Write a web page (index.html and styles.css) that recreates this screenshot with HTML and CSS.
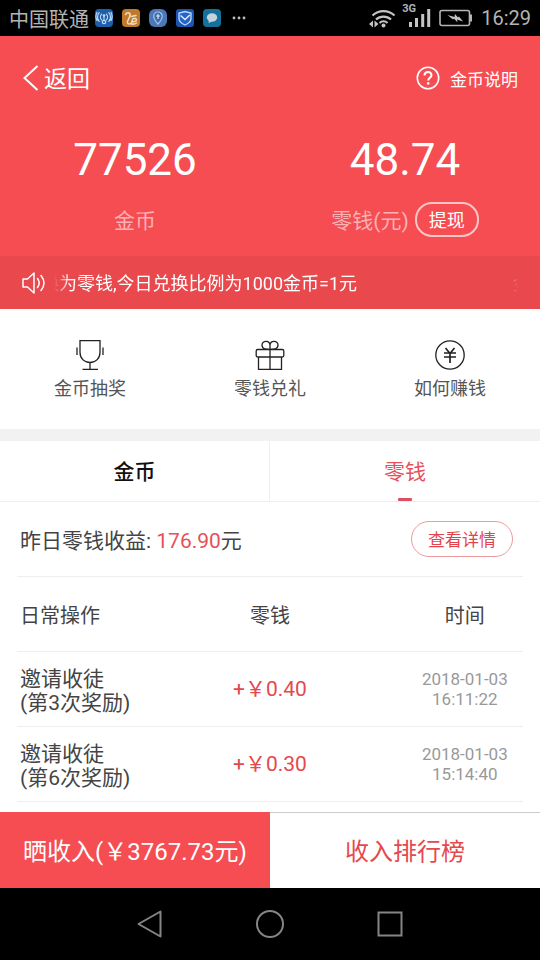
FILE: index.html
```html
<!DOCTYPE html>
<html lang="zh-CN">
<head>
<meta charset="utf-8">
<meta name="viewport" content="width=device-width, initial-scale=1">
<title>零钱</title>
<link rel="stylesheet" href="styles.css">
</head>
<body>
<div class="status">
  <span class="carrier">中国联通</span>
  <div class="apps">
    <svg width="18" height="18" viewBox="0 0 18 18"><rect width="18" height="18" rx="4" fill="#1c5fae"/><g fill="none" stroke="#c3dcf4" stroke-width="1.2" stroke-linecap="round"><path d="M6.600 5.200a4 4 0 0 0 0 5.600M11.400 5.200a4 4 0 0 1 0 5.600M4.200 3.600a6.500 6.500 0 0 0 0 8.800M13.800 3.600a6.500 6.500 0 0 1 0 8.800M2 3.500a8 8 0 0 0 0 8M16 3.500a8 8 0 0 1 0 8"/><path d="M9 7v4.500"/><circle cx="9" cy="13" r="1.700"/></g><circle cx="9" cy="6.500" r="1.300" fill="#c3dcf4"/></svg>
    <svg width="18" height="18" viewBox="0 0 18 18"><rect width="18" height="18" rx="4" fill="#c07a2c"/><g fill="none" stroke="#f2dcc0" stroke-width="1.500" stroke-linecap="round" stroke-linejoin="round"><path d="M3.500 5.500q1.500-2.500 3.500-1.500 2 1 .5 4L5.500 12.500q-.5 2.500 2 2.500 2.500-.5 2.500-3 .3-2.500 2.200-2.800 2.500 0 2.200 2-.4 1.800-4 1.600"/><path d="M9.500 15q3 .500 5-1M9 7.500l5-1"/></g></svg>
    <svg width="18" height="18" viewBox="0 0 18 18"><rect width="18" height="18" rx="6" fill="#4a78b8"/><path d="M9 15C6 11.500 4.800 9.500 4.800 7.200a4.200 4.200 0 0 1 8.400 0C13.200 9.500 12 11.500 9 15z" fill="#3d68aa" stroke="#a9c4e6" stroke-width="1.200"/><path d="M9 5v5M7.300 7h3.400" stroke="#c6d9f0" stroke-width="1.300"/></svg>
    <svg width="18" height="18" viewBox="0 0 18 18"><rect width="18" height="18" rx="3" fill="#1a55b4"/><path d="M9 2.500l6 1.600v5.400c0 3-2.500 5-6 6.500-3.500-1.500-6-3.500-6-6.500V4.100z" fill="#2465c8" stroke="#c4daf6" stroke-width="1.300"/><path d="M4.500 6.500L9 10.500l4.800-4.500" fill="none" stroke="#e2edfb" stroke-width="1.500"/></svg>
    <svg width="18" height="18" viewBox="0 0 18 18"><rect width="18" height="18" rx="4" fill="#13719c"/><ellipse cx="9" cy="8.500" rx="5.200" ry="4.200" fill="#c5d3da"/><path d="M6 11l-.5 3.200L9.500 12z" fill="#c5d3da"/></svg>
    <svg class="more" width="14" height="4" viewBox="0 0 14 4"><g fill="#bdbdbd"><circle cx="2" cy="2" r="1.400"/><circle cx="7" cy="2" r="1.400"/><circle cx="12" cy="2" r="1.400"/></g></svg>
  </div>
  <div class="signals">
    <svg width="28" height="20" viewBox="0 0 28 20"><g fill="none" stroke="#c4c4c4" stroke-width="2.200"><path d="M3.500 7.500a16 16 0 0 1 22 0"/><path d="M7 11.500a11 11 0 0 1 15 0"/><path d="M10.500 15a6 6 0 0 1 8 0"/></g><circle cx="14.500" cy="17.500" r="2" fill="#c4c4c4"/><path d="M0 16l4-3.500v7zM9.500 16l-4-3.500v7z" fill="#c4c4c4"/></svg>
    <span class="cell"><span class="net">3G</span><svg width="22" height="20" viewBox="0 0 22 20"><path d="M0 14h3v5H0zM6 10h3v9H6zM12.200 6h3v13h-3zM18.200 1h3v18h-3z" fill="#c4c4c4"/></svg></span>
    <svg width="34" height="18" viewBox="0 0 34 18"><rect x="1" y="1.500" width="29.500" height="15" rx="2" fill="none" stroke="#b5b5b5" stroke-width="1.600"/><path d="M31 5.500h2v7h-2z" fill="#b5b5b5"/><path d="M8.500 6l7 2 .5-3 3 3.500 1-1L24 12.500l-6-2 .5 3-3.500-4-1 1z" fill="#c4c4c4"/></svg>
    <span class="clock">16:29</span>
  </div>
</div>

<header class="hero">
  <div class="topbar">
    <a class="back" href="#"><svg width="18" height="28" viewBox="0 0 18 28"><path d="M15.500 2L2.500 14l13 12" fill="none" stroke="#fff" stroke-width="2"/></svg><span>返回</span></a>
    <a class="help" href="#"><svg width="24" height="24" viewBox="0 0 24 24"><g fill="none" stroke="#fff"><circle cx="12" cy="12" r="10.700" stroke-width="1.600"/><path d="M8.500 9.500c0-4.500 7-4.500 7-.3 0 2.500-3.300 2.600-3.300 5.300" stroke-width="2"/></g><circle cx="12.200" cy="17.400" r="1.300" fill="#fff"/></svg><span>金币说明</span></a>
  </div>
  <div class="balances">
    <div class="balance">
      <strong>77526</strong>
      <div class="caption"><span>金币</span></div>
    </div>
    <div class="balance">
      <strong>48.74</strong>
      <div class="caption"><span>零钱(元)</span><button class="withdraw" type="button">提现</button></div>
    </div>
  </div>
</header>

<div class="notice">
  <svg width="24" height="24" viewBox="0 0 24 24"><g fill="none" stroke="#fff" stroke-width="1.500" stroke-linejoin="round" stroke-linecap="round"><path d="M1 8h4.500L12 2v20l-6.500-6H1z"/><path d="M15.500 7.500q3.500 4.500 0 9M19 4.500q6 7.500 0 15"/></g></svg>
  <div class="marquee"><span>换为零钱,今日兑换比例为1000金币=1元</span><span>金</span></div>
</div>

<nav class="quick">
  <a href="#"><svg width="30" height="30" viewBox="0 0 30 30"><g fill="none" stroke="#222" stroke-width="1.300"><path d="M5 .7h20v11.500c0 6-4.200 10.300-10 10.300S5 18.200 5 12.200zM15 22.500V29M7.500 29.300h15.500M2 7.500v7.500M28 7.500v7.500"/></g></svg>金币抽奖</a>
  <a href="#"><svg width="30" height="30" viewBox="0 0 30 30"><g fill="none" stroke="#222" stroke-width="1.300"><rect x="1.200" y="9.500" width="27.600" height="7.500" rx="1.500"/><path d="M3.500 17v12.300h23V17M15 9.500v19.800"/><path d="M15 9.300c-3 0-8 .4-8-4.200 0-5 8-5 8 .4zM15 9.300c3 0 8 .4 8-4.200 0-5-8-5-8 .4z"/></g></svg>零钱兑礼</a>
  <a href="#"><svg width="30" height="30" viewBox="0 0 30 30"><g fill="none" stroke="#222"><circle cx="15" cy="15" r="14.200" stroke-width="1.300"/><path d="M10.500 8l4.500 5.500L19.500 8M15 13.500V23M9 13h12M9 17h12" stroke-width="1.700"/></g></svg>如何赚钱</a>
</nav>

<nav class="tabs">
  <button type="button">金币</button>
  <button type="button" class="active">零钱</button>
</nav>

<main class="records">
  <div class="summary">
    <p>昨日零钱收益: <em>176.90</em>元</p>
    <button class="detail" type="button">查看详情</button>
  </div>
  <table>
    <thead>
      <tr><th scope="col">日常操作</th><th scope="col">零钱</th><th scope="col">时间</th></tr>
    </thead>
    <tbody>
      <tr><td>邀请收徒<br>(第3次奖励)</td><td>+￥0.40</td><td>2018-01-03<br>16:11:22</td></tr>
      <tr><td>邀请收徒<br>(第6次奖励)</td><td>+￥0.30</td><td>2018-01-03<br>15:14:40</td></tr>
    </tbody>
  </table>
</main>

<footer class="actions">
  <button type="button" class="share">晒收入(￥3767.73元)</button>
  <button type="button" class="rank">收入排行榜</button>
</footer>

<div class="softkeys">
  <button type="button" aria-label="返回键"><svg width="30" height="30" viewBox="0 0 30 30"><path d="M25.500 2.500v25L3.500 15z" fill="none" stroke="#858585" stroke-width="2" stroke-linejoin="round"/></svg></button>
  <button type="button" aria-label="主屏幕"><svg width="30" height="30" viewBox="0 0 30 30"><circle cx="15" cy="15" r="13" fill="none" stroke="#858585" stroke-width="2"/></svg></button>
  <button type="button" aria-label="最近任务"><svg width="30" height="30" viewBox="0 0 30 30"><rect x="3.500" y="3.500" width="23" height="23" fill="none" stroke="#858585" stroke-width="2"/></svg></button>
</div>
</body>
</html>
```
FILE: styles.css
```css
* {
  box-sizing: border-box;
}

body {
  margin: 0;
  min-height: 100vh;
  display: flex;
  flex-direction: column;
  background: #fff;
  color: #444;
  font-family: Roboto, "Noto Sans CJK SC", sans-serif;
  font-size: 21px;
  line-height: 24px;
}

svg {
  display: block;
  flex: none;
}

a {
  color: inherit;
  text-decoration: none;
}

button {
  margin: 0;
  padding: 0;
  border: 0;
  background: none;
  color: inherit;
  font: inherit;
}

/* Chinese glyphs sit high in a Roboto line box */
.carrier,
.back span,
.help span,
.caption span,
.marquee,
.summary p {
  padding-top: 3px;
}

.status {
  display: flex;
  align-items: center;
  justify-content: space-between;
  height: 36px;
  padding: 0 9px;
  background: #000;
  color: #b4b4b4;
  font-size: 20px;
}

.apps {
  display: flex;
  align-items: center;
  gap: 9px;
  margin: 0 auto 0 6px;
}

.more {
  margin-left: 2px;
}

.signals {
  display: flex;
  align-items: center;
  gap: 8px;
}

.cell {
  position: relative;
  padding-left: 4px;
}

.net {
  position: absolute;
  top: -5px;
  left: -3px;
  font-size: 11px;
  line-height: 12px;
  font-weight: 700;
}

.hero {
  padding-bottom: 18px;
  background: #f54d52;
  color: #fff;
}

.topbar {
  display: flex;
  align-items: center;
  justify-content: space-between;
  height: 84px;
  padding: 0 22px;
}

.back,
.help {
  display: flex;
  align-items: center;
}

.back {
  gap: 4px;
  font-size: 23px;
}

.help {
  gap: 10px;
  font-size: 17px;
}

.balances {
  display: grid;
  grid-template-columns: 1fr 1fr;
  text-align: center;
}

.balance strong {
  display: block;
  font-size: 44px;
  line-height: 80px;
  font-weight: 400;
}

.caption {
  display: flex;
  align-items: center;
  justify-content: center;
  gap: 6px;
  height: 38px;
  color: #fbb2b4;
}

.withdraw {
  padding: 5px 12px 2px;
  border: 2px solid #fcc6c8;
  border-radius: 17px;
  color: #fff;
  font-size: 18px;
}

.notice {
  display: flex;
  align-items: center;
  gap: 8px;
  height: 53px;
  padding: 0 22px;
  background: #e9484d;
  color: #fff;
  font-size: 18px;
}

.marquee {
  display: flex;
  flex: 1;
  justify-content: space-between;
  overflow: hidden;
  white-space: nowrap;
  -webkit-mask-image: linear-gradient(90deg, transparent, #000 16px, #000 calc(100% - 16px), transparent);
  mask-image: linear-gradient(90deg, transparent, #000 16px, #000 calc(100% - 16px), transparent);
}

.marquee span {
  margin: 0 -13px;
}

.quick {
  display: grid;
  grid-template-columns: repeat(3, 1fr);
  height: 120px;
  padding-top: 31px;
  color: #555;
  font-size: 18px;
  line-height: 38px;
}

.quick a {
  display: flex;
  flex-direction: column;
  align-items: center;
}

.tabs {
  display: grid;
  grid-template-columns: 1fr 1fr;
  height: 73px;
  border-top: 12px solid #f2f2f2;
  border-bottom: 1px solid #eee;
  color: #111;
  font-weight: 500;
}

.tabs button {
  padding-top: 2px;
  border-right: 1px solid #eee;
}

.tabs .active {
  position: relative;
  border-right: 0;
  color: #e5505a;
  font-weight: 400;
}

.active::after {
  content: "";
  position: absolute;
  bottom: 0;
  left: calc(50% - 7px);
  width: 14px;
  height: 3px;
  border-radius: 1px;
  background: #dc4f5e;
}

.records {
  flex: 1;
  padding: 0 17px;
}

.summary {
  display: flex;
  align-items: center;
  justify-content: space-between;
  height: 75px;
  padding: 0 10px 0 3px;
  border-bottom: 1px solid #eee;
}

.summary p {
  margin: 0;
}

.summary em {
  color: #e84f58;
  font-style: normal;
}

.detail {
  padding: 6px 16px 4px;
  border: 1px solid #ee9a9f;
  border-radius: 18px;
  color: #e2444e;
  font-size: 17px;
}

table {
  width: 100%;
  table-layout: fixed;
  border-collapse: separate;
  border-spacing: 0;
  text-align: center;
}

th,
td {
  height: 75px;
  padding: 0;
  border-bottom: 1px solid #eee;
}

th {
  padding-top: 3px;
  font-size: 20px;
  font-weight: 400;
}

th:first-child,
td:first-child {
  width: 23%;
  padding-left: 3px;
  text-align: left;
  white-space: nowrap;
}

td:first-child {
  padding-top: 3px;
}

td:nth-child(2) {
  color: #e5484d;
}

th:last-child {
  width: 23%;
}

td:last-child {
  color: #999;
  font-size: 17px;
  line-height: 20px;
}

.actions {
  display: grid;
  grid-template-columns: 1fr 1fr;
  height: 76px;
  font-size: 24px;
}

.actions button {
  padding-top: 3px;
}

.share {
  background: #f54d52;
  color: #fff;
}

.rank {
  border-top: 1px solid #ccc;
  color: #e5484d;
}

.softkeys {
  display: flex;
  align-items: center;
  justify-content: center;
  gap: 90px;
  height: 72px;
  background: #000;
}
```
